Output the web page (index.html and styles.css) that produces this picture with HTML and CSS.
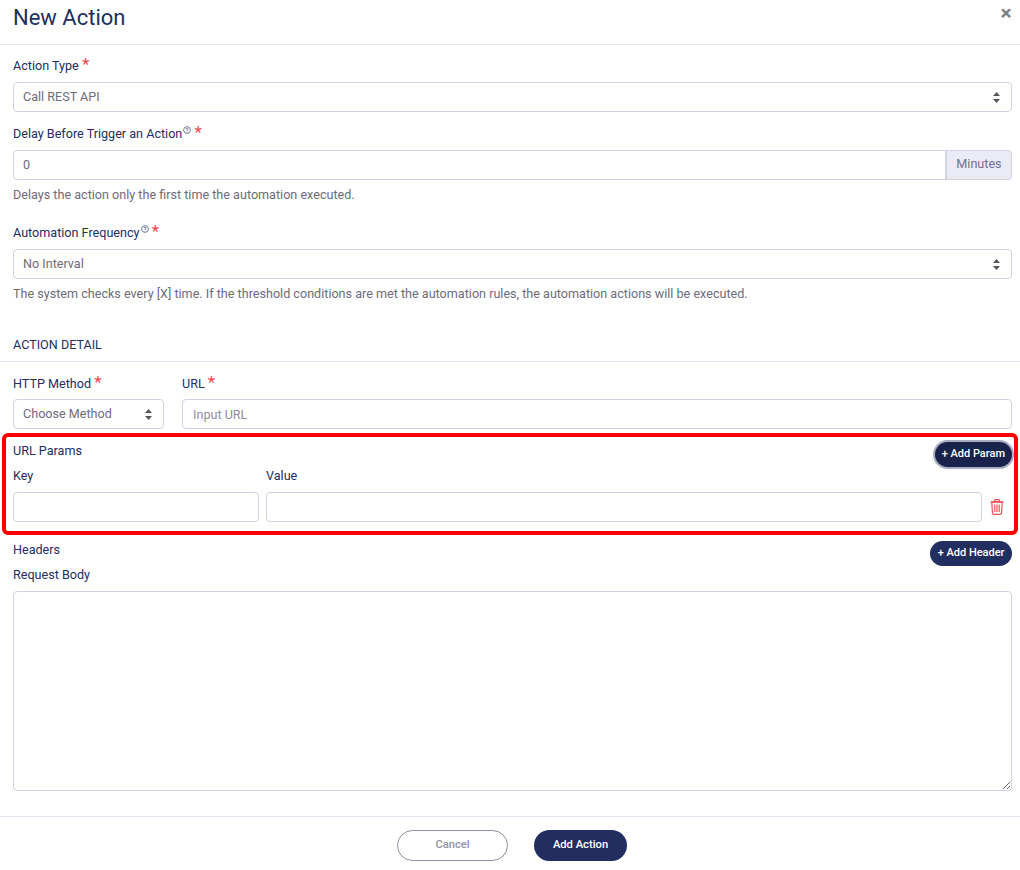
FILE: index.html
```html
<!DOCTYPE html>
<html lang="en">

<head>
    <meta charset="UTF-8">
    <meta name="viewport" content="width=device-width, initial-scale=1.0">
    <title>New Action</title>
    <link rel="stylesheet" href="styles.css">
</head>

<body>

    <div class="modal">
        <div class="modal-header">
            <h1 class="modal-title">New Action</h1>
            <button type="button" class="close" aria-label="Close">&times;</button>
        </div>

        <form class="modal-body">
            <div class="pad">
                <label class="label">Action Type <span class="req">*</span></label>
                <select class="control select">
                    <option>Call REST API</option>
                </select>

                <label class="label label-next">Delay Before Trigger an Action<svg class="hint" viewBox="0 0 8 8"><circle cx="4" cy="4" r="3.4"/><path d="M2.9 3.1C2.9 1.7 5.1 1.7 5.1 3.1C5.1 4 4 4 4 5M4 5.7V6.4"/></svg> <span class="req">*</span></label>
                <div class="input-group">
                    <input class="control" type="text" value="0">
                    <span class="addon">Minutes</span>
                </div>
                <p class="help">Delays the action only the first time the automation executed.</p>

                <label class="label label-gap">Automation Frequency<svg class="hint" viewBox="0 0 8 8"><circle cx="4" cy="4" r="3.4"/><path d="M2.9 3.1C2.9 1.7 5.1 1.7 5.1 3.1C5.1 4 4 4 4 5M4 5.7V6.4"/></svg> <span class="req">*</span></label>
                <select class="control select">
                    <option>No Interval</option>
                </select>
                <p class="help">The system checks every [X] time. If the threshold conditions are met the automation rules, the automation actions will be executed.</p>
            </div>

            <h2 class="section-title">ACTION DETAIL</h2>

            <div class="pad">
                <div class="method-row">
                    <div>
                        <label class="label">HTTP Method <span class="req">*</span></label>
                        <select class="control select">
                            <option>Choose Method</option>
                        </select>
                    </div>
                    <div>
                        <label class="label">URL <span class="req">*</span></label>
                        <input class="control" type="text" placeholder="Input URL">
                    </div>
                </div>
            </div>

            <div class="params-box">
                <div class="sub-head">
                    <span class="label">URL Params</span>
                    <button type="button" class="btn-add focused">+ Add Param</button>
                </div>
                <div class="param-grid">
                    <label class="label">Key</label>
                    <label class="label">Value</label>
                    <span></span>
                    <input class="control" type="text">
                    <input class="control" type="text">
                    <svg class="trash" viewBox="0 0 14 16">
                        <path d="M0.6 2.9H13.4M4.6 2.7V1.4C4.6 0.9 5 0.6 5.4 0.6H8.6C9 0.6 9.4 0.9 9.4 1.4V2.7"/>
                        <path d="M1.8 3.2L2.5 14.2C2.6 14.9 3 15.3 3.7 15.3H10.3C11 15.3 11.4 14.9 11.5 14.2L12.2 3.2Z"/>
                        <path d="M4.8 5.4V13M7 5.4V13M9.2 5.4V13"/>
                    </svg>
                </div>
            </div>

            <div class="pad">
                <div class="sub-head headers-head">
                    <span class="label">Headers</span>
                    <button type="button" class="btn-add">+ Add Header</button>
                </div>
                <label class="label">Request Body</label>
                <textarea class="control textarea"></textarea>
            </div>
        </form>

        <div class="modal-footer">
            <button type="button" class="btn btn-cancel">Cancel</button>
            <button type="button" class="btn btn-primary">Add Action</button>
        </div>
    </div>

</body>

</html>
```

FILE: styles.css
```css
* {
    margin: 0;
    padding: 0;
    box-sizing: border-box;
    font-family: 'Roboto', sans-serif;
}

body {
    background-color: #ffffff;
    font-size: 12.6px;
    line-height: 20px;
    color: #6e6b7b;
}

.modal-header {
    height: 45px;
    padding-left: 13px;
    border-bottom: 1px solid #e4e3ef;
    display: flex;
    justify-content: space-between;
    align-items: flex-start;
}

.modal-title {
    font-size: 22px;
    font-weight: 400;
    line-height: 36px;
    color: #212e5f;
}

.close {
    width: 28px;
    height: 26px;
    border: none;
    background: none;
    font-size: 21px;
    font-weight: 700;
    line-height: 26px;
    color: #7f7f7f;
}

.pad {
    padding: 0 8px 0 13px;
}

.modal-body > .pad:first-child {
    padding-top: 10px;
}

.label {
    display: block;
    padding-top: 1px;
    margin-bottom: 6px;
    color: #212e5f;
}

.label-next {
    margin-top: 11px;
}

.label-gap {
    margin-top: 17px;
}

.req {
    color: #f0454a;
    font-size: 17px;
    line-height: 14px;
}

.hint {
    width: 8px;
    height: 8px;
    margin: 0 0 9px 1px;
    vertical-align: middle;
    fill: none;
    stroke: #3f4a78;
    stroke-width: 0.7;
}

.control {
    display: block;
    width: 100%;
    height: 30px;
    padding: 0 10px;
    background-color: #ffffff;
    border: 1px solid #d3d2e4;
    border-radius: 4px;
    font-size: 12.6px;
    color: #6e6b7b;
    outline: none;
}

.control::placeholder {
    color: #8f8d9e;
}

.select {
    appearance: none;
    padding: 0 9px 2px;
    background-image: url("data:image/svg+xml,%3Csvg xmlns='http://www.w3.org/2000/svg' width='7' height='11'%3E%3Cpath fill='%23555' d='M3.5 0L7 4H0ZM3.5 11L0 7H7Z'/%3E%3C/svg%3E");
    background-repeat: no-repeat;
    background-position: right 11px center;
}

.input-group {
    display: flex;
}

.input-group .control {
    flex: 1;
    padding: 0 9px 2px;
    border-radius: 4px 0 0 4px;
}

.addon {
    width: 67px;
    height: 30px;
    line-height: 26px;
    text-align: center;
    background-color: #e9ecf5;
    border: 1px solid #d3d2e4;
    border-left-width: 2px;
    border-radius: 0 4px 4px 0;
    margin-left: -1px;
    color: #6e7191;
}

.help {
    margin-top: 5px;
}

.section-title {
    margin-top: 30px;
    padding: 1px 13px 6px;
    border-bottom: 1px solid #e4e3ef;
    font-size: 12.6px;
    font-weight: 400;
    line-height: 20px;
    color: #212e5f;
}

.method-row {
    display: grid;
    grid-template-columns: 151px 1fr;
    gap: 18px;
    margin-top: 11px;
}

.method-row .label {
    margin-bottom: 5px;
}

.params-box {
    margin: 4px 2px;
    padding: 3px 2px 9px 7px;
    border: 4px solid #ff0000;
    border-radius: 6px;
}

.sub-head {
    display: flex;
    justify-content: space-between;
    align-items: flex-start;
    height: 25px;
}

.btn-add {
    height: 25px;
    margin-top: 2px;
    padding: 0 7.5px 2px;
    border: none;
    border-radius: 13px;
    background-color: #212e5f;
    color: #ffffff;
    font-size: 11px;
    font-weight: 500;
}

.focused {
    background-color: #18224a;
    box-shadow: 0 0 0 2px #a8adc4;
    padding: 0 7px 2px;
}

.param-grid {
    display: grid;
    grid-template-columns: 246px 1fr 23px;
    column-gap: 7px;
    align-items: center;
}

.trash {
    width: 14px;
    height: 16px;
    margin-left: 1px;
    fill: none;
    stroke: #ef5055;
    stroke-width: 1.2;
}

.textarea {
    height: 200px;
    padding: 6px 10px;
}

.modal-footer {
    margin-top: 25px;
    padding: 13px 0 0 4px;
    border-top: 1px solid #e4e3ef;
    display: flex;
    justify-content: center;
    gap: 26px;
}

.btn {
    height: 31px;
    padding-bottom: 2px;
    border-radius: 16px;
    font-size: 11.2px;
    font-weight: 500;
}

.btn-cancel {
    width: 111px;
    background-color: #ffffff;
    border: 1px solid #8f8da0;
    color: #9492a6;
}

.btn-primary {
    width: 93px;
    background-color: #212e5f;
    border: none;
    color: #ffffff;
}
```
